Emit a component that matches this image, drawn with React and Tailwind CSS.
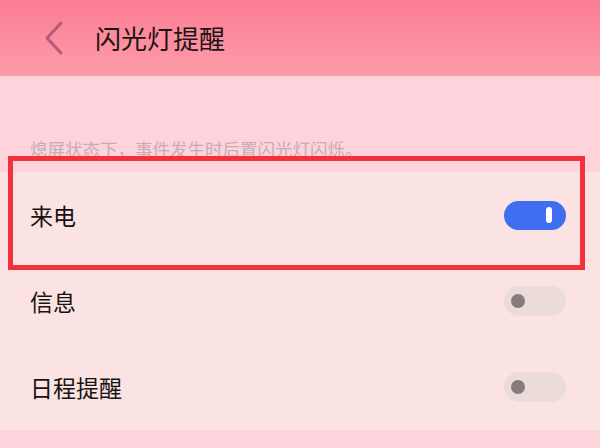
const ROWS = [
  { label: '来电', on: true },
  { label: '信息', on: false },
  { label: '日程提醒', on: false },
]

const FONT = { fontFamily: '"Noto Sans CJK SC", "Noto Sans", sans-serif' }

const Toggle = ({ on }) =>
  on ? (
    <div className="w-[62px] h-[29px] rounded-full bg-[#3f6ff0] flex items-center justify-end pr-[14px]">
      <div className="w-[6px] h-[16px] rounded-full bg-white" />
    </div>
  ) : (
    <div className="w-[62px] h-[30px] rounded-full bg-[#ebdbd9] flex items-center pl-[7px]">
      <div className="w-[14px] h-[14px] rounded-full bg-[#847b7a]" />
    </div>
  )

export default function App() {
  return (
    <div className="w-[600px] h-[448px] overflow-hidden bg-[#fdd3dc]" style={FONT}>
      <header className="h-[76px] flex items-center bg-gradient-to-b from-[#fb7d93] to-[#fd9ca9]">
        <svg width="22" height="34" viewBox="0 0 22 34" className="ml-[43px]">
          <path d="M18 2 L4 17 L18 32" fill="none" stroke="#b6597a" strokeWidth="3" strokeLinecap="round" strokeLinejoin="round" />
        </svg>
        <h1 className="ml-[30px] text-[26px] leading-none text-[#1d1416]">闪光灯提醒</h1>
      </header>

      <div className="h-[96px] bg-[#fed3dc] flex items-end pb-[15px] px-[30px]">
        <p className="text-[17.5px] leading-none text-[#c6adb5]">熄屏状态下，事件发生时后置闪光灯闪烁。</p>
      </div>

      <div className="bg-[#fae3e2]">
        {ROWS.map((row, i) => (
          <div key={row.label} className="relative h-[86px] flex items-center justify-between pl-[30px] pr-[34px]">
            <span className="text-[23px] leading-none text-[#181212]">{row.label}</span>
            <Toggle on={row.on} />
            {i === 0 && (
              <div className="absolute left-[8px] right-[15px] top-[-16px] bottom-[-12px] border-[5px] border-[#f4303a] pointer-events-none" />
            )}
          </div>
        ))}
      </div>
    </div>
  )
}
